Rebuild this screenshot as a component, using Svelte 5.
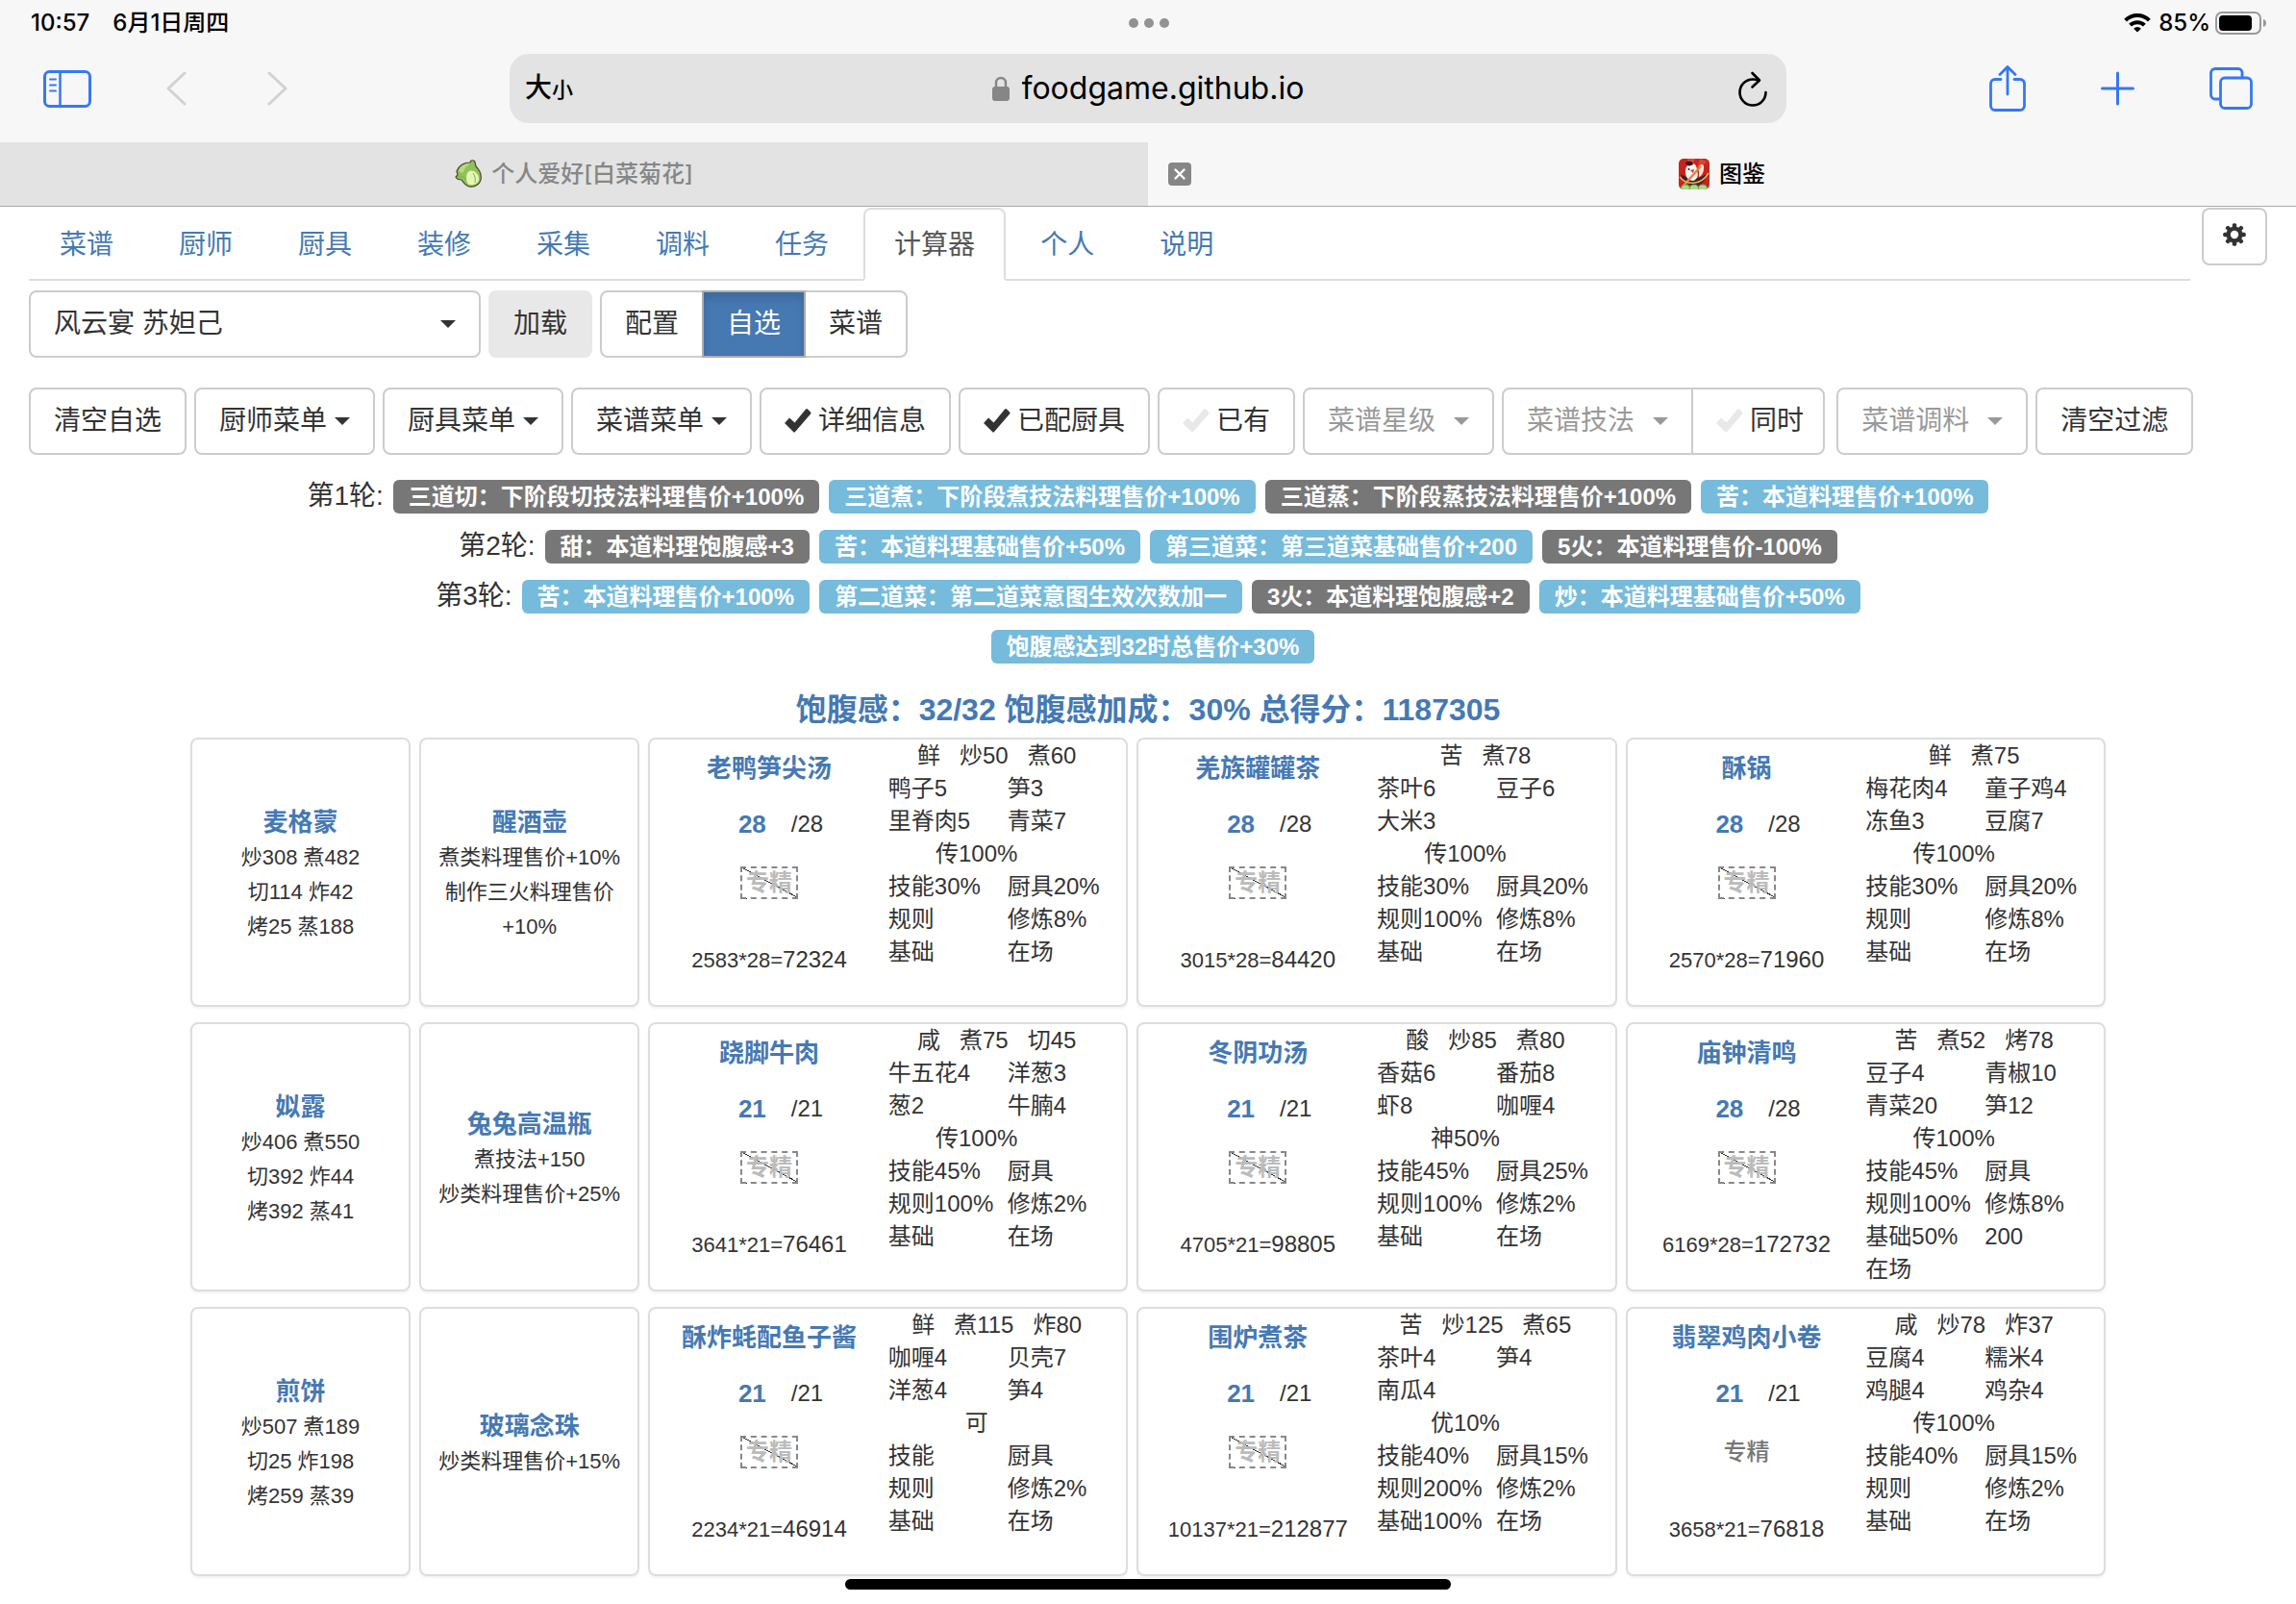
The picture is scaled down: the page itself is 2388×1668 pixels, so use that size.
<script>
  const navItems = ['菜谱', '厨师', '厨具', '装修', '采集', '调料', '任务', '计算器', '个人', '说明'];
  const activeNav = '计算器';
  const menus = ['厨师菜单', '厨具菜单', '菜谱菜单'];

  const rounds = [
    {
      label: '第1轮:',
      rules: [
        ['三道切：下阶段切技法料理售价+100%', false],
        ['三道煮：下阶段煮技法料理售价+100%', true],
        ['三道蒸：下阶段蒸技法料理售价+100%', false],
        ['苦：本道料理售价+100%', true]
      ]
    },
    {
      label: '第2轮:',
      rules: [
        ['甜：本道料理饱腹感+3', false],
        ['苦：本道料理基础售价+50%', true],
        ['第三道菜：第三道菜基础售价+200', true],
        ['5火：本道料理售价-100%', false]
      ]
    },
    {
      label: '第3轮:',
      rules: [
        ['苦：本道料理售价+100%', true],
        ['第二道菜：第二道菜意图生效次数加一', true],
        ['3火：本道料理饱腹感+2', false],
        ['炒：本道料理基础售价+50%', true]
      ]
    },
    { label: '', rules: [['饱腹感达到32时总售价+30%', true]] }
  ];

  const dish = (name, count, price, total, tags, items, rank, bonus, mastered = false) => ({
    name, count, price, total, tags, items, rank, bonus, mastered
  });

  const rows = [
    {
      chef: { name: '麦格蒙', lines: ['炒308 煮482', '切114 炸42', '烤25 蒸188'] },
      tool: { name: '醒酒壶', lines: ['煮类料理售价+10%', '制作三火料理售价+10%'] },
      dishes: [
        dish('老鸭笋尖汤', 28, 2583, 72324, ['鲜', '炒50', '煮60'], ['鸭子5', '笋3', '里脊肉5', '青菜7'], '传100%',
          ['技能30%', '厨具20%', '规则', '修炼8%', '基础', '在场']),
        dish('羌族罐罐茶', 28, 3015, 84420, ['苦', '煮78'], ['茶叶6', '豆子6', '大米3'], '传100%',
          ['技能30%', '厨具20%', '规则100%', '修炼8%', '基础', '在场']),
        dish('酥锅', 28, 2570, 71960, ['鲜', '煮75'], ['梅花肉4', '童子鸡4', '冻鱼3', '豆腐7'], '传100%',
          ['技能30%', '厨具20%', '规则', '修炼8%', '基础', '在场'])
      ]
    },
    {
      chef: { name: '姒露', lines: ['炒406 煮550', '切392 炸44', '烤392 蒸41'] },
      tool: { name: '兔兔高温瓶', lines: ['煮技法+150', '炒类料理售价+25%'] },
      dishes: [
        dish('跷脚牛肉', 21, 3641, 76461, ['咸', '煮75', '切45'], ['牛五花4', '洋葱3', '葱2', '牛腩4'], '传100%',
          ['技能45%', '厨具', '规则100%', '修炼2%', '基础', '在场']),
        dish('冬阴功汤', 21, 4705, 98805, ['酸', '炒85', '煮80'], ['香菇6', '番茄8', '虾8', '咖喱4'], '神50%',
          ['技能45%', '厨具25%', '规则100%', '修炼2%', '基础', '在场']),
        dish('庙钟清鸣', 28, 6169, 172732, ['苦', '煮52', '烤78'], ['豆子4', '青椒10', '青菜20', '笋12'], '传100%',
          ['技能45%', '厨具', '规则100%', '修炼8%', '基础50%', '200', '在场'])
      ]
    },
    {
      chef: { name: '煎饼', lines: ['炒507 煮189', '切25 炸198', '烤259 蒸39'] },
      tool: { name: '玻璃念珠', lines: ['炒类料理售价+15%'] },
      dishes: [
        dish('酥炸蚝配鱼子酱', 21, 2234, 46914, ['鲜', '煮115', '炸80'], ['咖喱4', '贝壳7', '洋葱4', '笋4'], '可',
          ['技能', '厨具', '规则', '修炼2%', '基础', '在场']),
        dish('围炉煮茶', 21, 10137, 212877, ['苦', '炒125', '煮65'], ['茶叶4', '笋4', '南瓜4'], '优10%',
          ['技能40%', '厨具15%', '规则200%', '修炼2%', '基础100%', '在场']),
        dish('翡翠鸡肉小卷', 21, 3658, 76818, ['咸', '炒78', '炸37'], ['豆腐4', '糯米4', '鸡腿4', '鸡杂4'], '传100%',
          ['技能40%', '厨具15%', '规则', '修炼2%', '基础', '在场'], true)
      ]
    }
  ];
</script>

{#snippet picker(label)}
  <span class="picker muted">
    <select aria-label={label}><option>{label}</option></select>
    <i class="caret"></i>
  </span>
{/snippet}

{#snippet toggle(label, checked, extra)}
  <label class="btn toggle {extra}"><input type="checkbox" {checked} />{label}</label>
{/snippet}

{#snippet profile(item)}
  <article class="card profile">
    <a href="#edit">{item.name}</a>
    {#each item.lines as line}<p>{line}</p>{/each}
  </article>
{/snippet}

<header class="chrome">
  <div class="status">
    <div class="clock"><span>10:57</span><span>6月1日周四</span></div>
    <div class="dots"><i></i><i></i><i></i></div>
    <div class="power">
      <svg width="28" height="20" viewBox="0 0 28 20" aria-hidden="true">
        <g fill="none" stroke="#000" stroke-width="4">
          <path d="M1.6 7.2a17.6 17.6 0 0 1 24.8 0" />
          <path d="M6.6 12.2a10.5 10.5 0 0 1 14.8 0" />
        </g>
        <path d="M14 19.6l-3.9-3.9a5.6 5.6 0 0 1 7.8 0z" />
      </svg>
      <span>85%</span>
      <svg width="54" height="24" viewBox="0 0 54 24" aria-hidden="true">
        <rect x="1" y="1" width="46" height="22" rx="6" fill="none" stroke="#999" stroke-width="2" />
        <rect x="4" y="4" width="34" height="16" rx="4" />
        <path d="M50 8c4 1 4 7 0 8z" fill="#999" />
      </svg>
    </div>
  </div>

  <div class="toolbar">
    <div class="tools">
      <button aria-label="边栏">
        <svg width="50" height="39" viewBox="0 0 50 39" fill="none" stroke="#3478f6" stroke-width="3">
          <rect x="1.5" y="1.5" width="47" height="36" rx="5" />
          <path d="M17.5 2v35" stroke-width="2.5" />
          <path d="M7 9.5h6M7 15.5h6M7 21.5h6" stroke-width="2" stroke-linecap="round" />
        </svg>
      </button>
      <button aria-label="后退">
        <svg width="24" height="36" viewBox="0 0 24 36" fill="none" stroke="#d2d2d2" stroke-width="3" stroke-linecap="round" stroke-linejoin="round"><path d="M19 2L2 18l17 16" /></svg>
      </button>
      <button aria-label="前进">
        <svg width="24" height="36" viewBox="0 0 24 36" fill="none" stroke="#d2d2d2" stroke-width="3" stroke-linecap="round" stroke-linejoin="round"><path d="M5 2l17 16L5 34" /></svg>
      </button>
    </div>

    <div class="address">
      <button class="textsize" aria-label="文字大小">大<small>小</small></button>
      <div class="url">
        <svg width="18" height="26" viewBox="0 0 18 26" aria-hidden="true">
          <path d="M4 12V7a5 5 0 0 1 10 0v5" fill="none" stroke="#868686" stroke-width="2.4" />
          <rect y="11" width="18" height="15" rx="3" fill="#868686" />
        </svg>
        <input type="text" aria-label="网址" value="foodgame.github.io" />
      </div>
      <button class="reload" aria-label="刷新">
        <svg width="30" height="37" viewBox="0 0 30 37" fill="none" stroke="#000" stroke-width="2.6" stroke-linecap="round" stroke-linejoin="round">
          <path d="M28.5 22a13.5 13.5 0 1 1-13.5-13.5c2.2 0 4.3.4 6 1.2" />
          <path d="M14.5 2l7.5 7.5-7.5 7" />
        </svg>
      </button>
    </div>

    <div class="tools right">
      <button aria-label="分享">
        <svg width="38" height="48" viewBox="0 0 38 48" fill="none" stroke="#3478f6" stroke-width="2.8" stroke-linecap="round" stroke-linejoin="round">
          <path d="M12 14.5H6A4.5 4.5 0 0 0 1.5 19v23A4.5 4.5 0 0 0 6 46.5h26a4.5 4.5 0 0 0 4.5-4.5V19a4.5 4.5 0 0 0-4.5-4.5h-6M19 30V2M11 9.5L19 1.5l8 8" />
        </svg>
      </button>
      <button aria-label="新标签页">
        <svg width="35" height="36" viewBox="0 0 35 36" fill="none" stroke="#3478f6" stroke-width="3" stroke-linecap="round"><path d="M17.5 2v32M1.5 18h32" /></svg>
      </button>
      <button aria-label="标签页概览">
        <svg width="45" height="44" viewBox="0 0 45 44" fill="none" stroke="#3478f6" stroke-width="2.8">
          <path d="M11 33H6a4.5 4.5 0 0 1-4.5-4.500V6A4.500 4.500 0 0 1 6 1.500h24A4 4 0 0 1 34 6v4.500" />
          <rect x="11.5" y="11" width="32" height="31.5" rx="4.5" />
        </svg>
      </button>
    </div>
  </div>

  <div class="tabs">
    <div class="tab back">
      <svg width="28" height="30" viewBox="0 0 28 30" aria-hidden="true">
        <path d="M16 3c0-3 5-3 5 0l1 4c4 4 6 9 5 14-1 5-7 8-12 7-4-1-6-4-8-7-3 0-5-1-6-3l2-2-1-4C4 7 9 3 16 3z" fill="#8fc25a" stroke="#54452f" stroke-width="1.200" stroke-linejoin="round" />
        <path d="M15 12c5-2 10 3 10 8 0 5-6 7-10 6-4-2-4-12 0-14z" fill="#e6f5b4" />
        <path d="M4 11c3-5 7-7 12-7-3 3-6 4-7 9-1 1-4 0-5-2z" fill="#b5dc80" />
        <path d="M3 17c4 0 7 1 9 4M19 14c2 3 3 6 2 10" fill="none" stroke="#7db04a" stroke-width="1" />
      </svg>
      <span>个人爱好[白菜菊花]</span>
    </div>
    <div class="tab front">
      <button class="close" aria-label="关闭标签页">
        <svg width="24" height="24" viewBox="0 0 24 24"><rect width="24" height="24" rx="4" fill="#868686" /><path d="M7.5 7.5l9 9M16.5 7.5l-9 9" stroke="#fff" stroke-width="2.4" stroke-linecap="round" /></svg>
      </button>
      <svg width="32" height="32" viewBox="0 0 32 32" aria-hidden="true">
        <defs><clipPath id="fav"><rect width="32" height="32" rx="5" /></clipPath></defs>
        <g clip-path="url(#fav)">
          <rect width="32" height="32" fill="#c9231f" />
          <path d="M9 0l4 12L17 0zM22 0l-4 12L30 3z" fill="#e0432e" />
          <path d="M2 16c3 10 9 12 15 12s11-4 12-12l-8 4H9z" fill="#3c1f38" />
          <path d="M7 14c0-6 3-9 7-9s5 4 5 8c2 4 0 9-4 10-5 0-8-4-8-9z" fill="#faf3ee" />
          <path d="M7 5c1-3 8-3 8 1-3 2-6 2-8-1z" fill="#2a1614" />
          <path d="M21 9c1-4 6-4 5 1 0 4-2 8-5 9z" fill="#f8e6dc" />
          <circle cx="10.5" cy="11" r="1" fill="#222" />
          <path d="M12 12l4-1-1 4z" fill="#d8342a" />
          <path d="M4 29L23 8" stroke="#d58a4a" stroke-width="2.5" />
          <path d="M1 19c7 9 22 9 30-4" fill="none" stroke="#f0b838" stroke-width="1.5" />
          <g fill="#a5dc84" stroke="#5fae4c" stroke-width="1"><circle cx="7" cy="32" r="5" /><circle cx="25" cy="32" r="5" /><circle cx="16" cy="32" r="5" /></g>
        </g>
      </svg>
      <span>图鉴</span>
    </div>
  </div>
</header>

<main>
  <div class="top">
    <nav>
      {#each navItems as item}
        <a href="#nav" class:active={item === activeNav}>{item}</a>
      {/each}
    </nav>
    <button class="btn gear" aria-label="设置">
      <svg width="24" height="24" viewBox="-12 -12 24 24">
        <g fill="#333">
          {#each [0, 45, 90, 135] as angle}
            <rect x="-2.2" y="-11.8" width="4.4" height="23.6" rx="1.6" transform="rotate({angle})" />
          {/each}
          <circle r="8.6" />
        </g>
        <circle r="4.2" fill="#fff" />
      </svg>
    </button>
  </div>

  <div class="bar">
    <span class="picker wide">
      <select aria-label="规则"><option>风云宴 苏妲己</option></select>
      <i class="caret"></i>
    </span>
    <button class="btn load">加载</button>
    <div class="group">
      <button class="btn">配置</button>
      <button class="btn on">自选</button>
      <button class="btn">菜谱</button>
    </div>
  </div>

  <div class="bar filters">
    <button class="btn">清空自选</button>
    {#each menus as menu}
      <button class="btn menu">{menu}<i class="caret"></i></button>
    {/each}
    {@render toggle('详细信息', true, '')}
    {@render toggle('已配厨具', true, '')}
    {@render toggle('已有', false, '')}
    {@render picker('菜谱星级')}
    <div class="group tail">
      {@render picker('菜谱技法')}
      {@render toggle('同时', false, 'narrow')}
    </div>
    {@render picker('菜谱调料')}
    <button class="btn">清空过滤</button>
  </div>

  <section class="rounds">
    {#each rounds as round}
      <div class="round">
        <span>{round.label}</span>
        {#each round.rules as [text, met]}
          <b class:met>{text}</b>
        {/each}
      </div>
    {/each}
  </section>

  <h1>饱腹感：32/32 饱腹感加成：30% 总得分：1187305</h1>

  <section class="grid">
    {#each rows as row}
      {@render profile(row.chef)}
      {@render profile(row.tool)}
      {#each row.dishes as d}
        <article class="card dish">
          <div class="summary">
            <a href="#edit">{d.name}</a>
            <p class="count"><a href="#edit">{d.count}</a><span>/{d.count}</span></p>
            <button class="master" class:off={!d.mastered}>专精</button>
            <p class="score"><small>{d.price}*{d.count}=</small>{d.total}</p>
          </div>
          <div class="detail">
            <p class="tags">{#each d.tags as tag}<span>{tag}</span>{/each}</p>
            <div class="pairs">{#each d.items as item}<span>{item}</span>{/each}</div>
            <p class="rank">{d.rank}</p>
            <div class="pairs">{#each d.bonus as item}<span>{item}</span>{/each}</div>
          </div>
        </article>
      {/each}
    {/each}
  </section>
</main>

<div class="home"></div>

<style>
  :global(body) {
    background: #fff;
    color: #333;
    font-family: 'Liberation Sans', 'Noto Sans CJK SC', sans-serif;
    font-size: 28px;
    line-height: 40px;
  }
  :global(*) { box-sizing: border-box; }
  button, input, select {
    margin: 0;
    padding: 0;
    border: 0;
    background: none;
    color: inherit;
    font: inherit;
  }
  svg { display: block; flex: none; }
  p { margin: 0; }
  a { color: #4579b4; text-decoration: none; }

  .chrome {
    border-bottom: 1px solid #aaa;
    background: #f7f7f7;
    color: #000;
    font-family: Inter, 'Noto Sans CJK SC', sans-serif;
  }
  .status {
    display: grid;
    grid-template-columns: 1fr auto 1fr;
    align-items: center;
    height: 48px;
    padding: 0 30px 0 32px;
    font-size: 24px;
    font-weight: 500;
  }
  .clock { display: flex; gap: 24px; }
  .dots { display: flex; gap: 6px; }
  .dots i { width: 10px; height: 10px; border-radius: 50%; background: #929292; }
  .power { display: flex; align-items: center; justify-content: flex-end; }
  .power span { margin: 0 5px 0 8px; }

  .toolbar {
    display: grid;
    grid-template-columns: 1fr 1328px 1fr;
    align-items: center;
    padding: 8px 0 20px;
  }
  .tools { display: flex; align-items: center; gap: 78px; padding: 0 45px; }
  .tools.right { justify-content: flex-end; }
  .address {
    display: grid;
    grid-template-columns: 1fr auto 1fr;
    align-items: center;
    height: 72px;
    padding: 0 20px;
    border-radius: 20px;
    background: #e3e3e3;
  }
  .textsize { justify-self: start; margin-left: -4px; font-weight: 500; }
  .textsize small { font-size: 22px; }
  .url { display: flex; align-items: center; gap: 13px; }
  .url input { width: 294px; font-size: 32px; }
  .reload { justify-self: end; }

  .tabs { display: grid; grid-template-columns: 1fr 1fr; height: 66px; font-size: 24px; }
  .tab { display: flex; align-items: center; justify-content: center; gap: 10px; }
  .back { background: #e3e3e3; color: #868686; font-weight: 500; }
  .front { position: relative; font-weight: 500; }
  .close { position: absolute; left: 21px; }

  main { padding: 1px 30px 20px; }
  .top { display: flex; align-items: flex-start; gap: 12px; }
  nav { display: flex; flex: 1; gap: 4px; border-bottom: 2px solid #ddd; }
  nav a {
    margin-bottom: -2px;
    padding: 17px 30px 15px;
    border: 2px solid transparent;
    border-radius: 8px 8px 0 0;
  }
  nav .active { border-color: #ddd #ddd #fff; background: #fff; color: #555; }

  .btn, .picker {
    height: 70px;
    border: 2px solid #ccc;
    border-radius: 8px;
    background: #fff;
    white-space: nowrap;
  }
  .btn { padding: 0 24px; }
  .gear { display: grid; place-items: center; width: 68px; height: 60px; padding: 0 0 4px; }
  .load { border-color: #e8e8e8; background: #e8e8e8; }
  .bar { display: flex; gap: 8px; margin-top: 10px; }
  .filters { margin-top: 31px; }
  .picker { display: grid; grid-template-columns: 1fr auto; align-items: center; width: 199px; }
  .picker.wide { width: 470px; }
  .picker select { grid-area: 1 / 1 / 2 / 3; width: 100%; height: 66px; padding: 0 24px; appearance: none; }
  .picker .caret { grid-area: 1 / 2; margin-right: 24px; pointer-events: none; }
  .muted { color: #999; }
  .caret {
    width: 16px;
    border: 8px solid transparent;
    border-top-color: currentColor;
    border-bottom-width: 0;
  }
  .menu, .toggle { display: flex; align-items: center; gap: 8px; }
  .toggle { gap: 7px; }
  .toggle input {
    width: 28px;
    height: 28px;
    background: #e8e8e8;
    appearance: none;
    clip-path: path('M0 16L5 10.5 10.5 15.5 22 1.5Q23 .5 24 1.5L27 4.5Q28 5.5 27 6.5L11 25Q10 26 9 25Z');
  }
  .toggle input:checked { background: #333; }
  .narrow { padding-right: 20px; }
  .group { display: flex; }
  .tail { margin-right: 4px; }
  .group > :global(*:not(:first-child)) { margin-left: -2px; border-top-left-radius: 0; border-bottom-left-radius: 0; }
  .group > :global(*:not(:last-child)) { border-top-right-radius: 0; border-bottom-right-radius: 0; }
  .group .on {
    z-index: 1;
    border-color: #adadad;
    background: #4678b2;
    box-shadow: inset 0 6px 10px rgba(0, 0, 0, 0.125);
    color: #fff;
  }

  .rounds { margin-top: 17px; }
  .round { display: flex; align-items: center; justify-content: center; gap: 10px; height: 52px; }
  .round b {
    padding: 0 16px;
    border-radius: 6px;
    background: #777;
    color: #fff;
    font-size: 24px;
    line-height: 35px;
  }
  .round .met { background: #76bbdb; }

  h1 {
    margin: 0;
    padding-top: 12px;
    color: #4579b4;
    font-size: 32px;
    line-height: 57px;
    text-align: center;
  }

  .grid {
    display: grid;
    grid-template-columns: 229fr 229fr 499fr 499fr 499fr;
    grid-auto-rows: minmax(280px, auto);
    gap: 16px 9px;
    padding: 0 168px;
  }
  .card {
    border: 2px solid #ddd;
    border-radius: 8px;
    box-shadow: 0 2px 2px rgba(0, 0, 0, 0.05);
  }
  .card a { font-size: 26px; font-weight: bold; }
  .profile {
    display: flex;
    flex-direction: column;
    align-items: center;
    justify-content: center;
    padding-top: 4px;
    font-size: 22px;
    line-height: 36px;
    text-align: center;
  }
  .profile a { line-height: 37px; }
  .dish { display: grid; grid-template-columns: 1fr 1fr; font-size: 24px; line-height: 34px; }
  .summary { display: flex; flex-direction: column; align-items: center; padding-top: 13px; }
  .count { display: flex; gap: 26px; margin-top: 24px; padding-left: 24px; }
  .master {
    height: 34px;
    margin-top: 27px;
    padding: 0 4px;
    border: 2px solid transparent;
    color: #777;
    font-weight: 500;
    line-height: 30px;
  }
  .master.off {
    border: 2px dashed #888;
    background: linear-gradient(to top right, transparent 50%, #333 50%, #333 calc(50% + 1px), transparent calc(50% + 1px));
    color: #bbb;
    font-weight: bold;
  }
  .score { margin-top: 46px; }
  .score small { font-size: 22px; }
  .tags { display: flex; justify-content: center; gap: 20px; padding-right: 22px; }
  .pairs { display: grid; grid-template-columns: 1fr 1fr; white-space: nowrap; }
  .rank { padding-right: 64px; text-align: center; }

  .home {
    position: fixed;
    bottom: 15px;
    left: 50%;
    width: 630px;
    height: 11px;
    margin-left: -315px;
    border-radius: 6px;
    background: #000;
  }
</style>
